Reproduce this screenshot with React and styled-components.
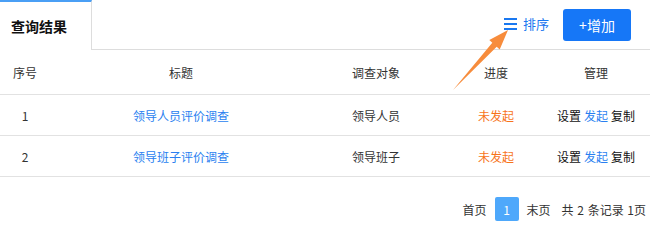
import React from 'react'
import styled, { createGlobalStyle } from 'styled-components'

const GlobalStyle = createGlobalStyle`
  body {
    margin: 0;
    background: #fff;
    font-family: "Noto Sans CJK SC", "Noto Sans", sans-serif;
    color: #333;
  }
`

const Page = styled.div`
  position: relative;
  width: 650px;
  height: 241px;
  overflow: hidden;
`

const Header = styled.div`
  display: flex;
  align-items: stretch;
  height: 50px;
  box-sizing: border-box;
`

const Tab = styled.div`
  width: 92px;
  box-sizing: border-box;
  border-top: 2px solid #4a9ff5;
  border-right: 1px solid #ddd;
  display: flex;
  align-items: center;
  padding-left: 11px;
  font-size: 14px;
  font-weight: bold;
  color: #111;
`

const Actions = styled.div`
  flex: 1;
  display: flex;
  align-items: center;
  justify-content: flex-end;
  gap: 14px;
  padding-right: 19px;
  border-bottom: 1px solid #ddd;
`

const SortLink = styled.a`
  display: flex;
  align-items: center;
  gap: 5px;
  color: #1a78f0;
  font-size: 13px;
  cursor: pointer;
  margin-top: -2px;
`

const AddButton = styled.button`
  width: 68px;
  height: 32px;
  border: none;
  border-radius: 3px;
  background: #1677f7;
  color: #fff;
  font-family: inherit;
  font-size: 14px;
  padding: 0;
  margin-top: 1px;
  cursor: pointer;
`

const Row = styled.div`
  display: grid;
  grid-template-columns: 50px 262px 128px 112px 88px;
  height: ${p => (p.$head ? 45 : 41)}px;
  box-sizing: border-box;
  border-bottom: 1px solid #e2e2e2;
  font-size: 12px;
`

const Cell = styled.div`
  display: flex;
  align-items: center;
  justify-content: center;
  color: ${p => p.$color || '#333'};
  gap: 3px;
`

const Op = styled.span`
  color: ${p => (p.$blue ? '#2a7ff0' : '#111')};
  cursor: pointer;
`

const Pager = styled.div`
  display: flex;
  align-items: center;
  justify-content: flex-end;
  gap: 8px;
  padding: 20px 4px 0 0;
  font-size: 12px;
  color: #333;
`

const PageNum = styled.span`
  width: 24px;
  height: 24px;
  border-radius: 2px;
  background: #4ea8fb;
  color: #fff;
  display: flex;
  align-items: center;
  justify-content: center;
`

const Total = styled.span`
  margin-left: 3px;
  word-spacing: 1px;
`

const Arrow = styled.svg`
  position: absolute;
  left: 0;
  top: 0;
  pointer-events: none;
`

const rows = [
  { id: 1, title: '领导人员评价调查', target: '领导人员' },
  { id: 2, title: '领导班子评价调查', target: '领导班子' },
]

export default function App() {
  return (
    <Page>
      <GlobalStyle />
      <Header>
        <Tab>查询结果</Tab>
        <Actions>
          <SortLink>
            <svg width="14" height="12" viewBox="0 0 14 12">
              <rect x="0" y="0" width="13" height="2" fill="#1a78f0" />
              <rect x="0" y="5" width="13" height="2" fill="#1a78f0" />
              <rect x="0" y="10" width="13" height="2" fill="#1a78f0" />
            </svg>
            排序
          </SortLink>
          <AddButton>+增加</AddButton>
        </Actions>
      </Header>
      <Row $head>
        <Cell>序号</Cell>
        <Cell>标题</Cell>
        <Cell>调查对象</Cell>
        <Cell>进度</Cell>
        <Cell>管理</Cell>
      </Row>
      {rows.map(r => (
        <Row key={r.id}>
          <Cell>{r.id}</Cell>
          <Cell $color="#2a7ff0">{r.title}</Cell>
          <Cell>{r.target}</Cell>
          <Cell $color="#f7741c">未发起</Cell>
          <Cell>
            <Op>设置</Op>
            <Op $blue>发起</Op>
            <Op>复制</Op>
          </Cell>
        </Row>
      ))}
      <Pager>
        <span>首页</span>
        <PageNum>1</PageNum>
        <span>末页</span>
        <Total>共 2 条记录 1页</Total>
      </Pager>
      <Arrow width="650" height="241">
        <polygon
          points="453,90 496.7,46.7 499.7,49.4 508,30 489.3,40 492.3,42.7"
          fill="#f78c3c"
        />
      </Arrow>
    </Page>
  )
}
